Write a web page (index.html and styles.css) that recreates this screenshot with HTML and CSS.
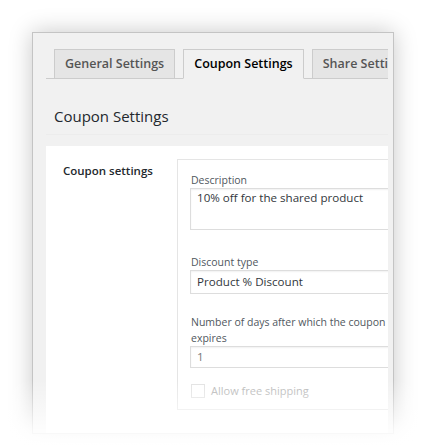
FILE: index.html
```html
<!DOCTYPE html>
<html>
<head>
<meta charset="utf-8">
<link rel="stylesheet" href="styles.css">
</head>
<body>
<div class="stage">
  <div class="frame">
    <div class="wrap">
      <nav class="tabs">
        <span class="tab">General Settings</span>
        <span class="tab active">Coupon Settings</span>
        <span class="tab">Share Settings</span>
      </nav>
      <h2 class="heading">Coupon Settings</h2>
      <div class="panel">
        <div class="th">Coupon settings</div>
        <div class="box">
          <label class="label">Description</label>
          <div class="textarea">10% off for the shared product</div>
          <label class="label gap">Discount type</label>
          <div class="select">Product % Discount</div>
          <label class="label gap2">Number of days after which the coupon expires</label>
          <div class="input">1</div>
          <div class="check"><span class="cb"></span><span class="cbtext">Allow free shipping</span></div>
        </div>
      </div>
    </div>
  </div>
</div>
<div class="fade"></div>
</body>
</html>
```
FILE: styles.css
```css
html, body {
  margin: 0;
  background: #fff;
  font-family: "Open Sans", "DejaVu Sans", sans-serif;
  width: 422px;
  height: 447px;
  overflow: hidden;
}
.stage {
  padding: 32px 0 0 32px;
}
.frame {
  width: 362px;
  height: 402px;
  box-sizing: border-box;
  border: 1px solid #c4c4c4;
  background: #f1f1f1;
  box-shadow: 0 0 22px rgba(0, 0, 0, 0.22);
  overflow: hidden;
}
.wrap {
  margin: 0 5px 0 13px;
  overflow: hidden;
  height: 100%;
}
.tabs {
  display: flex;
  align-items: flex-end;
  gap: 8px;
  padding-left: 8px;
  margin-top: 15px;
  border-bottom: 1px solid #ccc;
  height: 30px;
}
.tab {
  flex-shrink: 0;
  white-space: nowrap;
  box-sizing: border-box;
  height: 30px;
  line-height: 28px;
  margin-bottom: -1px;
  padding: 0 10px;
  border: 1px solid #ccc;
  background: #e5e5e5;
  color: #555;
  font-size: 12.5px;
  font-weight: 600;
}
.tab.active {
  background: #f1f1f1;
  color: #000;
  border-bottom-color: #f1f1f1;
}
.heading {
  margin: 0;
  padding: 26px 0 0 8px;
  height: 29px;
  font-size: 15px;
  font-weight: 400;
  color: #23282d;
  line-height: 22px;
  border-bottom: 1px solid #ececec;
}
.panel {
  margin-top: 11px;
  width: 430px;
  height: 300px;
  background: #fff;
  display: flex;
  padding: 13px 0 0 17px;
  box-sizing: border-box;
}
.th {
  width: 114px;
  flex-shrink: 0;
  font-size: 11.5px;
  font-weight: 600;
  color: #23282d;
  padding-top: 4px;
}
.box {
  width: 280px;
  height: 251px;
  border: 1px solid #e5e5e5;
  box-sizing: border-box;
  padding: 12px 0 0 13px;
}
.label {
  display: block;
  font-size: 10.5px;
  line-height: 16px;
  color: #50575e;
  width: 205px;
}
.label.gap { margin-top: 24px; }
.label.gap2 { margin-top: 20px; }
.textarea, .select, .input {
  box-sizing: border-box;
  width: 240px;
  margin-left: -1px;
  border: 1px solid #ddd;
  box-shadow: inset 0 1px 2px rgba(0, 0, 0, 0.06);
  font-size: 11.6px;
  color: #32373c;
  padding-left: 6px;
}
.textarea {
  height: 42px;
  padding-top: 0;
  line-height: 18px;
}
.select {
  height: 24px;
  line-height: 22px;
  margin-top: 0;
}
.input {
  height: 22px;
  line-height: 20px;
  color: #777;
}
.check {
  margin-top: 15px;
  display: flex;
  align-items: center;
  gap: 6px;
}
.cb {
  width: 12px;
  height: 12px;
  border: 1px solid #e2e2e2;
  background: #fff;
}
.cbtext {
  font-size: 11px;
  color: #b5b5b5;
}
.fade {
  position: absolute;
  left: 0;
  right: 0;
  top: 380px;
  height: 67px;
  background: linear-gradient(rgba(255, 255, 255, 0), rgba(255, 255, 255, 0.85) 75%, #fff);
}
```
